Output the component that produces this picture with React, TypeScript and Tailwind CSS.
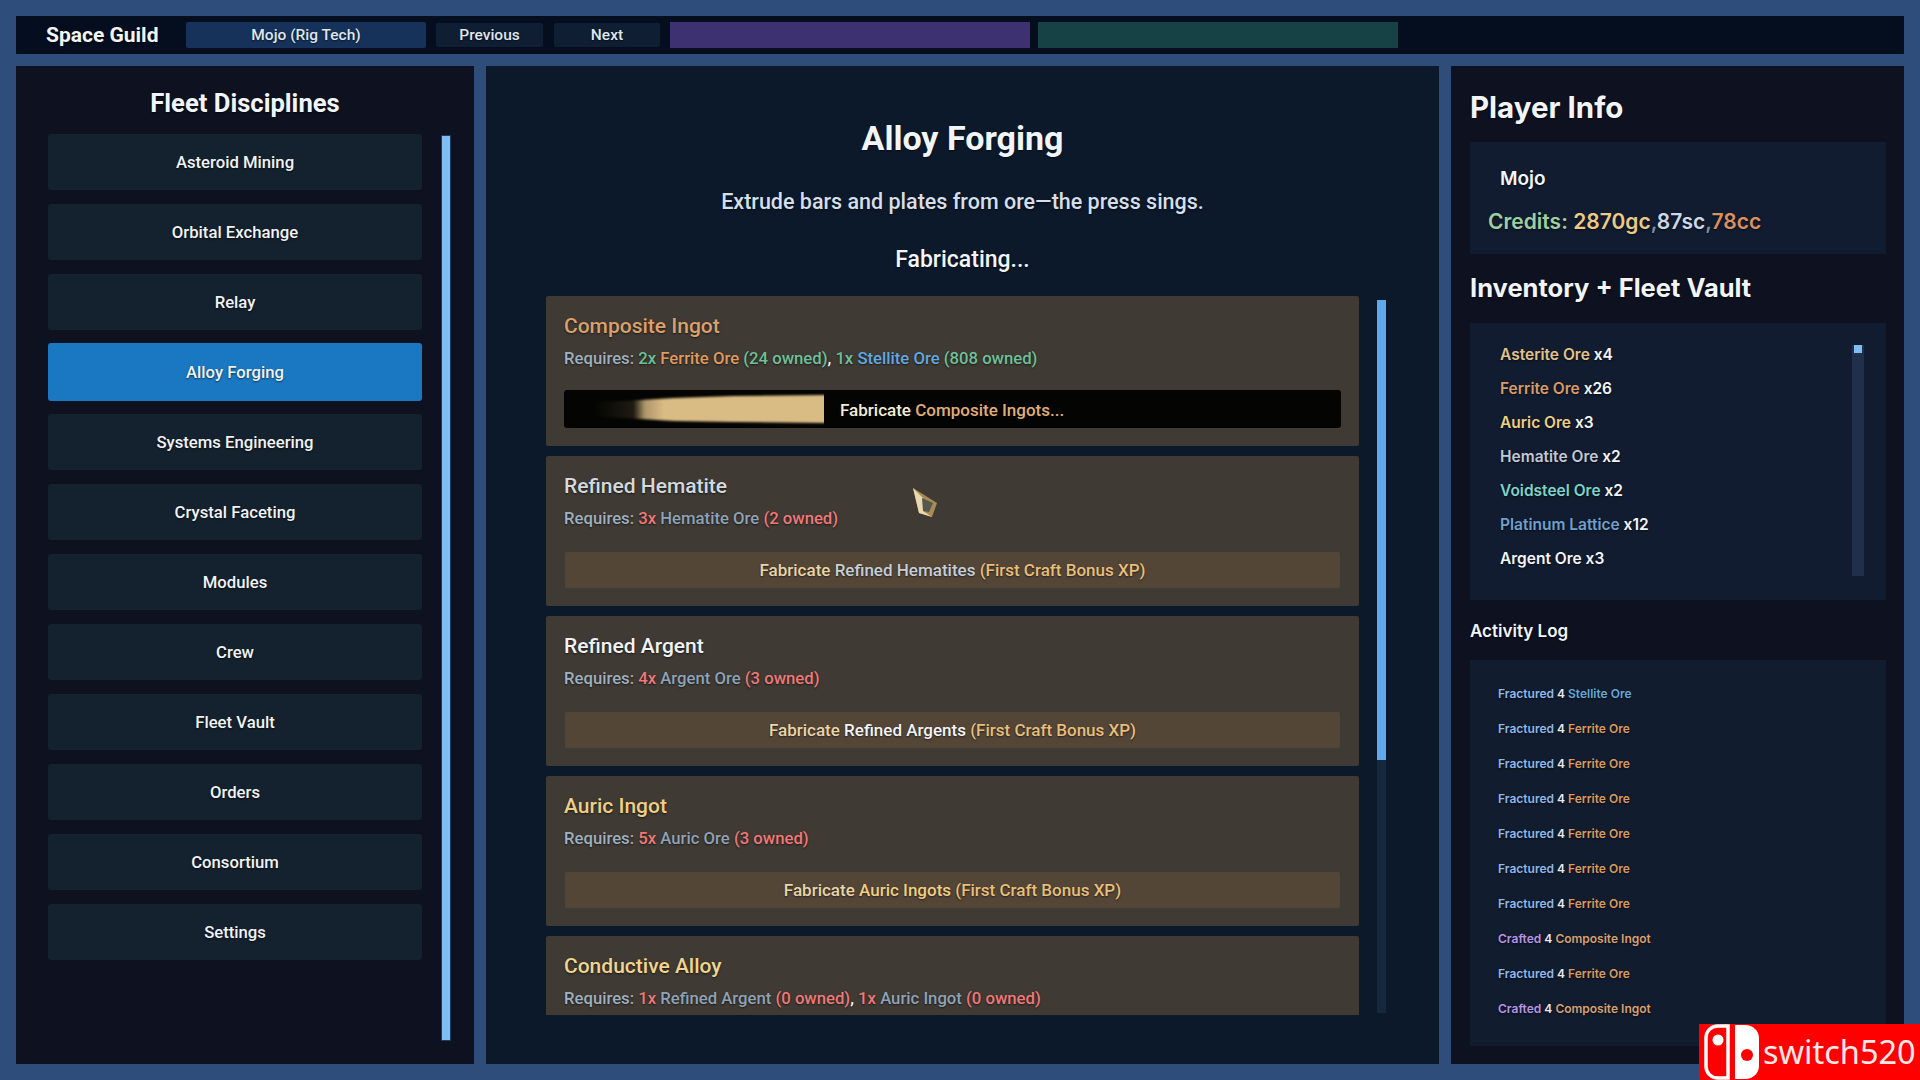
import React from "react";

const NAV = ["Asteroid Mining","Orbital Exchange","Relay","Alloy Forging","Systems Engineering","Crystal Faceting","Modules","Crew","Fleet Vault","Orders","Consortium","Settings"];

type Seg = [string, string];
const C = { req:"text-[#9fb0bf]", green:"text-[#6fc09a]", red:"text-[#f07878]", grey:"text-[#8fa3b8]", white:"text-[#e6e9ee]" };

const CARDS: { title: string; tc: string; req: Seg[]; btn?: Seg[]; cut?: boolean }[] = [
  { title:"Composite Ingot", tc:"text-[#dca06c]", req:[["Requires: ",C.req],["2x ",C.green],["Ferrite Ore ","text-[#e0995f]"],["(24 owned)",C.green],[", ","text-white"],["1x ",C.green],["Stellite Ore ","text-[#62a9e2]"],["(808 owned)",C.green]] },
  { title:"Refined Hematite", tc:"text-[#d4d9de]", req:[["Requires: ",C.req],["3x ",C.red],["Hematite Ore ",C.grey],["(2 owned)",C.red]], btn:[["Fabricate ","text-[#e8d5aa]"],["Refined Hematites ","text-[#c5cfd8]"],["(First Craft Bonus XP)","text-[#e6bf7c]"]] },
  { title:"Refined Argent", tc:"text-[#f0f2f5]", req:[["Requires: ",C.req],["4x ",C.red],["Argent Ore ",C.grey],["(3 owned)",C.red]], btn:[["Fabricate ","text-[#e8d5aa]"],["Refined Argents ","text-[#f2f4f7]"],["(First Craft Bonus XP)","text-[#e6bf7c]"]] },
  { title:"Auric Ingot", tc:"text-[#f0cf85]", req:[["Requires: ",C.req],["5x ",C.red],["Auric Ore ",C.grey],["(3 owned)",C.red]], btn:[["Fabricate ","text-[#e8d5aa]"],["Auric Ingots ","text-[#f0cf85]"],["(First Craft Bonus XP)","text-[#e6bf7c]"]] },
  { title:"Conductive Alloy", tc:"text-[#f0d590]", req:[["Requires: ",C.req],["1x ",C.red],["Refined Argent ",C.grey],["(0 owned)",C.red],[", ","text-white"],["1x ",C.red],["Auric Ingot ",C.grey],["(0 owned)",C.red]], cut:true },
];

const INV: [string,string,string][] = [
  ["Asterite Ore","x4","text-[#e0c48a]"],["Ferrite Ore","x26","text-[#d99a68]"],["Auric Ore","x3","text-[#efcf80]"],["Hematite Ore","x2","text-[#c0c8d4]"],["Voidsteel Ore","x2","text-[#7ed4c8]"],["Platinum Lattice","x12","text-[#6fa0cc]"],["Argent Ore","x3","text-[#f2f4f7]"],
];

const LOG: [string,string,string,string][] = [
  ["Fractured","Stellite Ore","text-[#8fb8e8]","text-[#62a9d8]"],
  ...Array.from({length:6},():[string,string,string,string]=>["Fractured","Ferrite Ore","text-[#8fb8e8]","text-[#d99a5f]"]),
  ["Crafted","Composite Ingot","text-[#b795e6]","text-[#d8a070]"],
  ["Fractured","Ferrite Ore","text-[#8fb8e8]","text-[#d99a5f]"],
  ["Crafted","Composite Ingot","text-[#b795e6]","text-[#d8a070]"],
];

function Segs({ s }: { s: Seg[] }) {
  return <>{s.map(([t, c], i) => <span key={i} className={`${c} whitespace-pre`}>{t}</span>)}</>;
}

export default function App() {
  return (
    <div className="relative flex flex-col gap-3 w-[1920px] h-[1080px] overflow-hidden bg-[#2f4d7b] p-4 text-white font-['Roboto',sans-serif] font-medium [text-shadow:0_1px_2px_rgba(0,0,0,0.6)]">
      {/* top bar */}
      <div className="flex items-center h-[38px] shrink-0 bg-[#040e1e] pl-[30px]">
        <div className="w-[140px] pt-[1px] text-[21px] font-bold text-[#f2f5f8]">Space Guild</div>
        <div className="flex items-center justify-center pt-[1px] w-[240px] h-[26px] bg-[#16325a] rounded-[2px] text-[15.5px] text-[#dfe6ee]">Mojo (Rig Tech)</div>
        <div className="flex items-center justify-center pt-[1px] ml-[10px] w-[107px] h-[24px] bg-[#0f1e33] rounded-[2px] text-[15.5px] text-[#dfe6ee]">Previous</div>
        <div className="flex items-center justify-center pt-[1px] ml-[11px] w-[106px] h-[24px] bg-[#0f1e33] rounded-[2px] text-[15.5px] text-[#dfe6ee]">Next</div>
        <div className="ml-[10px] w-[360px] h-[26px] bg-[#3d3172]" />
        <div className="ml-[8px] w-[360px] h-[26px] bg-[#164246]" />
      </div>

      <div className="flex flex-1 gap-3 min-h-0">
        {/* left */}
        <div className="flex flex-col w-[458px] shrink-0 bg-[#0e1120] pt-5">
          <div className="text-center text-[25.6px] font-bold leading-[36px] -mt-[1px] mb-[1px] text-[#f2f5f8]">Fleet Disciplines</div>
          <div className="flex flex-1 min-h-0 mt-[12px] pl-8 pb-[23px]">
            <div className="flex flex-col gap-[14px] w-[374px]">
              {NAV.map((n) => (
                <div key={n} className={`flex items-center justify-center pt-[2px] rounded-[3px] text-[16.7px] text-[#f0f3f6] ${n === "Alloy Forging" ? "bg-[#1a78c2] h-[58px] -my-[1px]" : "bg-[#14212e] h-[56px]"}`}>{n}</div>
              ))}
            </div>
            <div className="ml-[19px] w-[10px] mt-[1px] bg-[#7fbdf2] border border-[#1c3a66]" />
          </div>
        </div>

        {/* center */}
        <div className="flex flex-col w-[953px] shrink-0 bg-[#0c192b] pt-[52px]">
          <div className="text-center text-[34px] leading-[40px] font-bold text-[#f2f5f8]">Alloy Forging</div>
          <div className="text-center text-[21.5px] leading-[28px] mt-[30px] text-[#d5dfea]">Extrude bars and plates from ore—the press sings.</div>
          <div className="text-center text-[23px] leading-[30px] mt-[29px] text-[#f2f5f8]">Fabricating...</div>
          <div className="flex mt-[21px] pl-[60px]">
            <div className="flex flex-col gap-[10px] w-[813px] h-[719px] overflow-hidden">
              {CARDS.map((c, i) => (
                <div key={c.title} className="shrink-0 h-[150px] bg-[#3f3a34] px-[18px] pt-[18px] rounded-[2px]">
                  <div className={`text-[21px] leading-[24px] ${c.tc}`}>{c.title}</div>
                  <div className="text-[16.7px] leading-[20px] mt-[11px]"><Segs s={c.req} /></div>
                  {i === 0 ? (
                    <div className="flex items-center mt-[21px] h-[38px] bg-[#040502] rounded-[3px] overflow-hidden">
                      <svg width="260" height="38" viewBox="0 0 260 38" className="shrink-0">
                        <defs>
                          <linearGradient id="cm" x1="0" x2="1" y1="0" y2="0">
                            <stop offset="0" stopColor="#d9bb84" stopOpacity="0" />
                            <stop offset="0.17" stopColor="#d9bb84" stopOpacity="0.12" />
                            <stop offset="0.22" stopColor="#d9bb84" stopOpacity="0.8" />
                            <stop offset="0.3" stopColor="#d9bb84" />
                            <stop offset="1" stopColor="#d9bb84" />
                          </linearGradient>
                          <filter id="bl" x="-5%" y="-20%" width="110%" height="140%"><feGaussianBlur stdDeviation="0.8" /></filter>
                        </defs>
                        <polygon points="30,12 60,11 110,8 170,6 262,5 262,33 170,32 110,31 60,28 30,27" fill="url(#cm)" filter="url(#bl)" />
                      </svg>
                      <div className="ml-4 pt-[3px] text-[17px]"><Segs s={[["Fabricate ","text-[#f5ecd8]"],["Composite Ingots...","text-[#e0ad78]"]]} /></div>
                    </div>
                  ) : c.btn ? (
                    <div className="flex items-center justify-center pt-[2px] mt-[23px] mx-[1px] h-[36px] bg-[#544637] rounded-[2px] text-[17px]"><Segs s={c.btn} /></div>
                  ) : null}
                </div>
              ))}
            </div>
            <div className="relative ml-[18px] w-[9px] h-[713px] mt-[4px] bg-[#14283f]">
              <div className="h-[460px] bg-[#5fa8ec]" />
            </div>
          </div>
        </div>

        {/* right */}
        <div className="flex flex-col w-[453px] shrink-0 bg-[#0e1120] px-[19px] pt-[22px] font-['Inter',sans-serif] font-semibold">
          <div className="text-[29.5px] leading-[38px] font-bold text-[#f2f5f8]">Player Info</div>
          <div className="mt-[16px] h-[112px] w-[416px] bg-[#111c30] pt-[25px]">
            <div className="pl-[30px] text-[19px] leading-[24px] text-[#f2f5f8]">Mojo</div>
            <div className="pl-[18px] mt-[18px] text-[21px] leading-[26px]"><Segs s={[["Credits: ","text-[#9fcfa0]"],["2870gc","text-[#ecc987]"],[",","text-[#7f8ea0]"],["87sc","text-[#ccd8e6]"],[",","text-[#7f8ea0]"],["78cc","text-[#d98f60]"]]} /></div>
          </div>
          <div className="mt-[18px] text-[25.5px] leading-[32px] font-bold text-[#f2f5f8]">Inventory + Fleet Vault</div>
          <div className="flex mt-[19px] h-[277px] w-[416px] bg-[#121c30] pt-[23px] pl-[30px]">
            <div className="flex flex-col flex-1">
              {INV.map(([n, q, c]) => (
                <div key={n} className="h-[34px] text-[15.5px] leading-[18px]"><span className={c}>{n}</span> <span className="text-[#f2f5f8]">{q}</span></div>
              ))}
            </div>
            <div className="w-[12px] h-[231px] mr-[22px] -mt-[1px] bg-[#202f4c] px-[2px]"><div className="h-[8px] bg-[#7fbdf2]" /></div>
          </div>
          <div className="mt-[19px] text-[17px] leading-[24px] text-[#f2f5f8]">Activity Log</div>
          <div className="flex flex-col mt-[17px] h-[386px] w-[416px] bg-[#121c2f] pt-[25px] pl-[28px]">
            {LOG.map(([a, b, c1, c2], i) => (
              <div key={i} className="h-[35px] text-[12px] leading-[18px]"><span className={c1}>{a}</span> <span className="text-[#e6e9ee]">4</span> <span className={c2}>{b}</span></div>
            ))}
          </div>
        </div>
      </div>

      {/* cursor */}
      <svg width="32" height="36" viewBox="0 0 32 36" className="absolute left-[910px] top-[486px]">
        <polygon points="3,2 27,17 22,31 9,27" fill="#a98a55" />
        <polygon points="3,2 13,12 13,25 22,31 9,27" fill="#ead9ae" />
        <polygon points="12,12 23,17 19,26 13,25" fill="#55584f" />
      </svg>

      {/* watermark */}
      <div className="absolute right-0 bottom-0 flex items-center w-[221px] h-[56px] bg-[#ff0000] [text-shadow:none]">
        <svg width="58" height="56" viewBox="0 0 58 56" className="shrink-0 ml-[4px]">
          <path d="M25 2H15C8 2 3 7 3 14V42C3 49 8 54 15 54H25Z" fill="none" stroke="#fff" strokeWidth="3.5" />
          <circle cx="15" cy="16" r="5.5" fill="#fff" />
          <path d="M32 1H42C50 1 56 7 56 14V42C56 49 50 55 42 55H32Z" fill="#fff" />
          <circle cx="44" cy="31" r="6" fill="#f00" />
        </svg>
        <div className="ml-[2px] text-[32.5px] leading-none font-['Noto_Sans',sans-serif] font-normal text-[#ffe8e8]">switch520</div>
      </div>
    </div>
  );
}
